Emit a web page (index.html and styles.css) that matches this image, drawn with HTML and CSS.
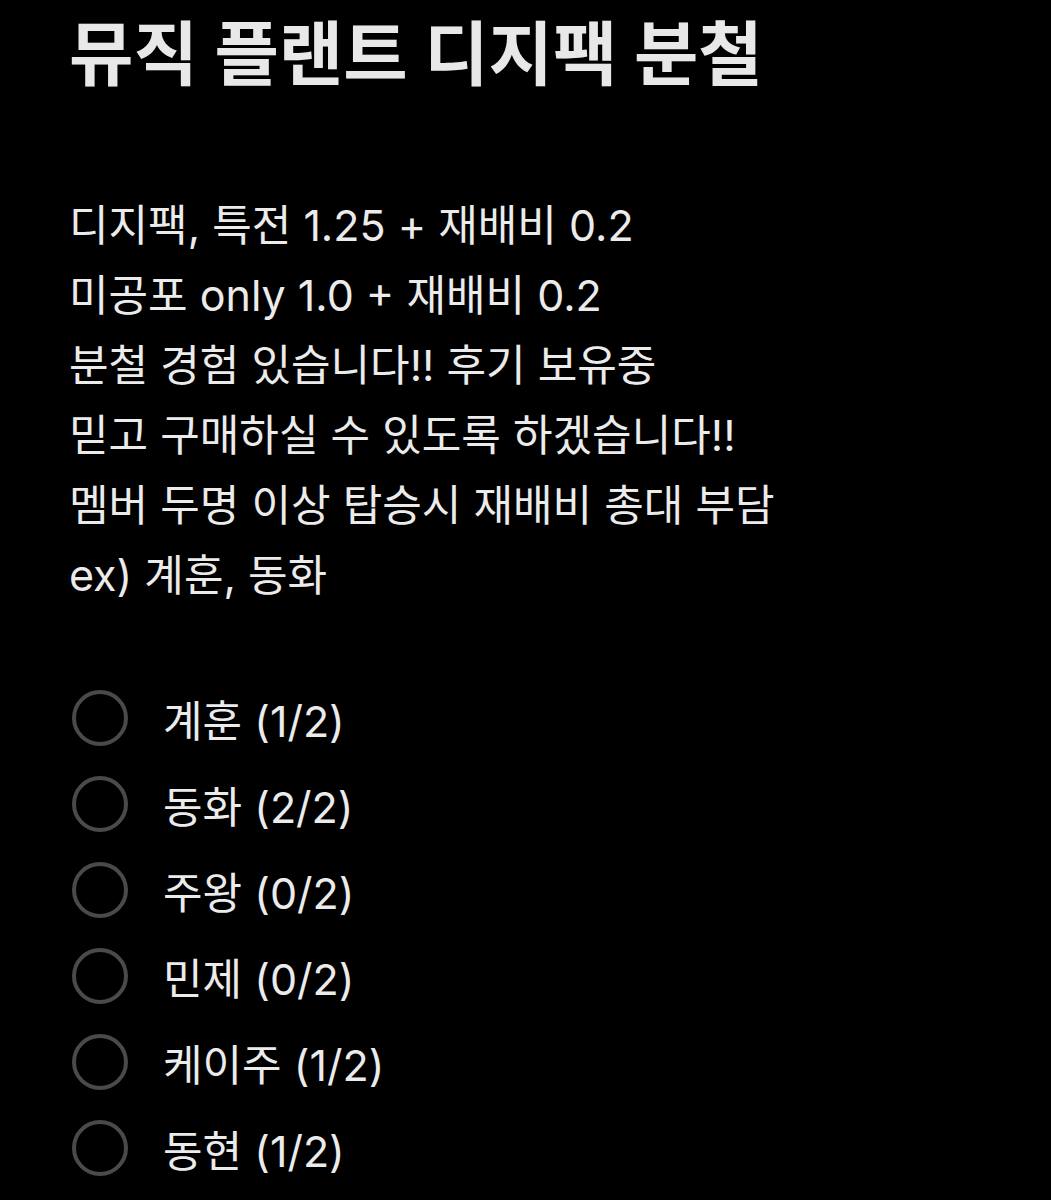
FILE: index.html
```html
<!DOCTYPE html>
<html lang="ko">
<head>
    <meta charset="UTF-8">
    <meta name="viewport" content="width=device-width, initial-scale=1.0">
    <title>뮤직 플랜트 디지팩 분철</title>
    <link rel="stylesheet" href="styles.css">
</head>
<body>
    <h1 class="title">뮤직 플랜트 디지팩 분철</h1>

    <div class="desc">
        <p>디지팩, 특전 1.25 + 재배비 0.2</p>
        <p>미공포 only 1.0 + 재배비 0.2</p>
        <p>분철 경험 있습니다!! 후기 보유중</p>
        <p>믿고 구매하실 수 있도록 하겠습니다!!</p>
        <p>멤버 두명 이상 탑승시 재배비 총대 부담</p>
        <p>ex) 계훈, 동화</p>
    </div>

    <ul class="options">
        <li><span class="radio"></span>계훈 (1/2)</li>
        <li><span class="radio"></span>동화 (2/2)</li>
        <li><span class="radio"></span>주왕 (0/2)</li>
        <li><span class="radio"></span>민제 (0/2)</li>
        <li><span class="radio"></span>케이주 (1/2)</li>
        <li><span class="radio"></span>동현 (1/2)</li>
    </ul>
</body>
</html>
```

FILE: styles.css
```css
body {
    margin: 0;
    padding: 15px 0 0 69px;
    background: #000;
    color: #ebebeb;
    font-family: Inter, "Noto Sans CJK KR", sans-serif;
}
.title {
    margin: 0;
    font-size: 70px;
    line-height: 80px;
    font-weight: 700;
    color: #e8e8e8;
}
.desc {
    margin-top: 95px;
    font-size: 43px;
    line-height: 70px;
}
.desc p {
    margin: 0;
}
.options {
    list-style: none;
    margin: 65px 0 0 0;
    padding: 0;
}
.options li {
    display: flex;
    align-items: center;
    gap: 35px;
    height: 86px;
    font-size: 43px;
}
.radio {
    width: 48px;
    height: 48px;
    margin-left: 3px;
    border: 4px solid #4a4a4a;
    border-radius: 50%;
    flex-shrink: 0;
}
```
